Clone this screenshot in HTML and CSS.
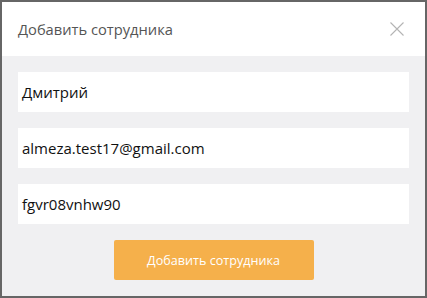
FILE: index.html
```
<!DOCTYPE html>
<html lang="ru">
<head>
<meta charset="utf-8">
<link rel="stylesheet" href="styles.css">
</head>
<body>
<div class="modal">
  <div class="modal-header">
    <span class="modal-title">Добавить сотрудника</span>
    <svg class="close" width="14" height="14" viewBox="0 0 14 14"><path d="M0.5 0.5 L13.5 13.5 M13.5 0.5 L0.5 13.5" stroke="#b4b4b4" stroke-width="1.1" fill="none"/></svg>
  </div>
  <div class="modal-body">
    <div class="field">Дмитрий</div>
    <div class="field">almeza.test17@gmail.com</div>
    <div class="field">fgvr08vnhw90</div>
    <div class="actions"><button class="btn">Добавить сотрудника</button></div>
  </div>
</div>
</body>
</html>
```
FILE: styles.css
```
html, body { margin: 0; padding: 0; }
body { font-family: "Open Sans", "Noto Sans", sans-serif; }
.modal {
  width: 427px; height: 298px; box-sizing: border-box;
  border: 2px solid #666;
  background: #f0f0f2;
  display: flex; flex-direction: column;
}
.modal-header {
  height: 54px; background: #fff;
  display: flex; align-items: center; justify-content: space-between;
  padding: 0 21px 0 16px;
}
.modal-title { font-size: 14.7px; color: #555; }
.close { display: block; }
.modal-body {
  padding: 16px 16px 0 16px;
  display: flex; flex-direction: column; gap: 16px;
}
.field {
  height: 40px; background: #fff; box-sizing: border-box;
  padding: 0 4px; display: flex; align-items: center;
  font-size: 15px; color: #111;
}
.actions { display: flex; justify-content: center; }
.btn {
  width: 200px; height: 40px; border: none; border-radius: 2px;
  background: #f5b04b; color: #fff; font-family: inherit; font-size: 12.6px;
}
```
